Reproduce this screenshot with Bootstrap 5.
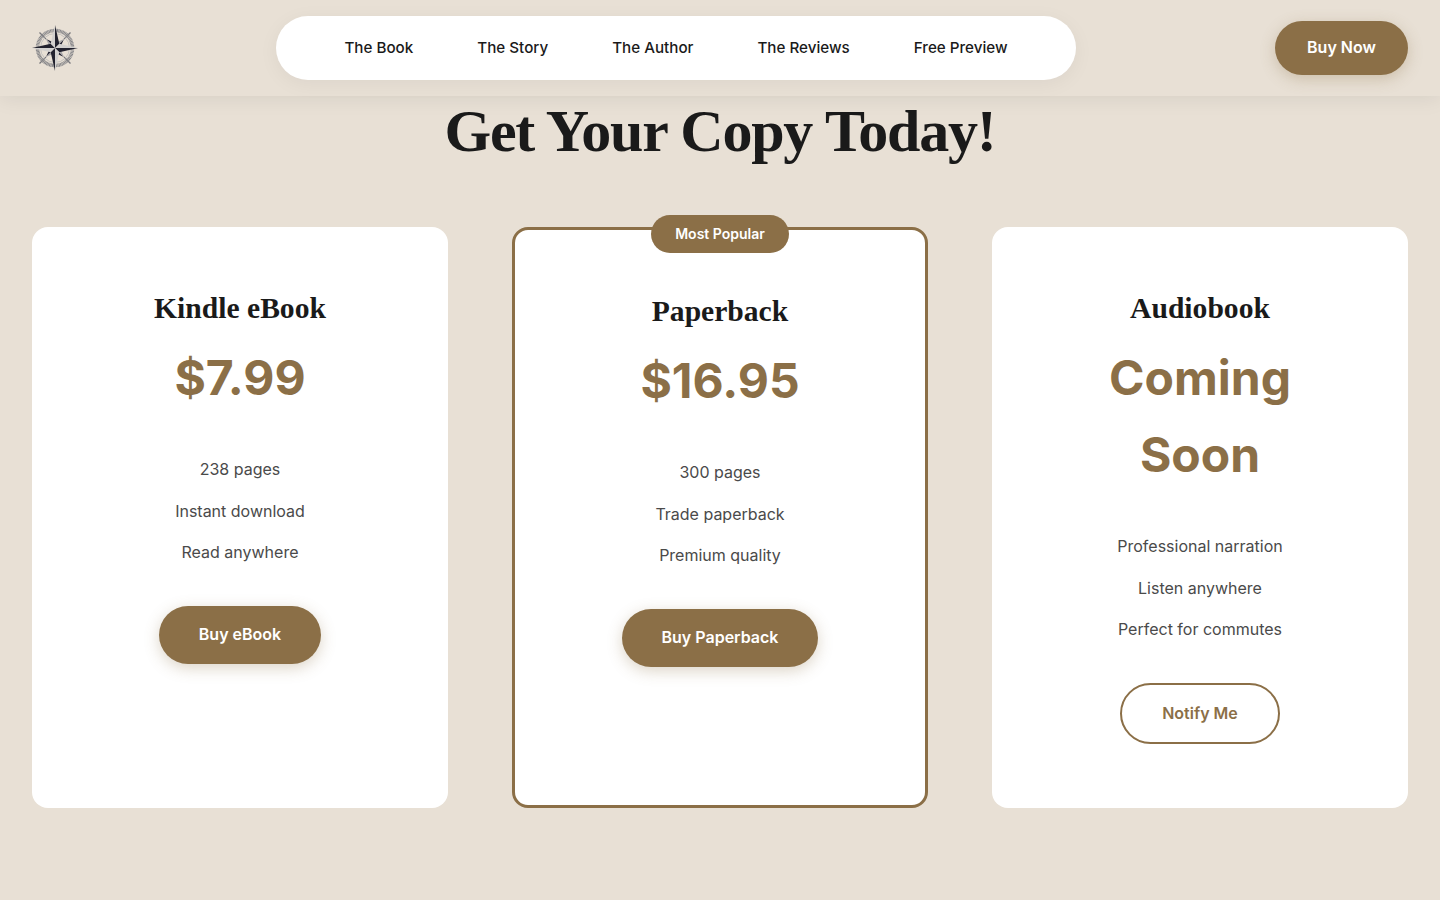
<!DOCTYPE html>
<html lang="en">
<head>
  <meta charset="UTF-8" />
  <meta name="viewport" content="width=device-width, initial-scale=1" />
  <title>Get Your Copy</title>
  <link href="https://cdn.jsdelivr.net/npm/bootstrap@5.3.3/dist/css/bootstrap.min.css" rel="stylesheet" />
  <style>
    body { background: #e8e0d5; font-family: Inter, "Liberation Sans", sans-serif; color: #1a1a1a; line-height: 1.6; }
    .top-bar { height: 96px; padding: 0 32px; background: #e8e0d5; box-shadow: 0 2px 20px rgba(0,0,0,.08); }
    .brand-mark { width: 46px; height: 46px; display: block; }
    .pill-nav { width: 800px; height: 64px; margin-right: 1px; background: #fff; border-radius: 32px; box-shadow: 0 4px 20px rgba(0,0,0,.05); gap: 64px; }
    .pill-nav a { color: #1a1a1a; font-size: 15.2px; font-weight: 500; text-decoration: none; }
    .btn-brown { background: #8b6f47; color: #fff; border: 0; border-radius: 50px; font-weight: 600; box-shadow: 0 4px 15px rgba(139,111,71,.3); }
    .btn-brown:hover { background: #8b6f47; color: #fff; }
    .btn-now { width: 133px; height: 54px; padding: 0 0 2px; font-size: 16px; }
    .btn-plan { height: 58px; padding: 0 40px 2px; font-size: 16px; }
    .btn-notify { width: 160px; height: 61px; padding: 0 0 1px; background: #fff; color: #8b6f47; border: 2px solid #8b6f47; border-radius: 50px; font-weight: 600; font-size: 16px; }
    .btn-notify:hover { background: #fff; color: #8b6f47; border-color: #8b6f47; }
    .page-title { font-family: "Liberation Serif", serif; font-weight: 700; font-size: 60px; line-height: 70px; margin: 0 0 61px; color: #1a1a1a; letter-spacing: -1.2px; }
    .plans { padding: 0 32px; }
    .plan-box { height: 581px; border: 0; border-radius: 16px; padding: 48px 56px; text-align: center; background: #fff; }
    .plan-box.featured { border: 3px solid #8b6f47; padding: 48px 53px; }
    .plan-name { font-family: "Liberation Serif", serif; font-weight: 700; font-size: 29.6px; line-height: 46px; margin: 10px 0 0; color: #1a1a1a; }
    .plan-price { font-size: 48px; font-weight: 700; color: #8b6f47; line-height: 77px; margin: 8px 0 33px; }
    .plan-points { margin: 0 0 32px; color: #4a4a4a; font-size: 16px; }
    .plan-points li { padding: 8px 0; line-height: 25.6px; }
    .ribbon { top: -15px; left: 50%; transform: translateX(-50%); width: 138px; height: 38px; background: #8b6f47; color: #fff; border-radius: 20px; font-size: 14px; font-weight: 600; }
  </style>
</head>
<body>
<header class="top-bar d-flex align-items-center justify-content-between position-relative">
  <a href="#" aria-label="Home">
    <svg class="brand-mark" viewBox="1 1 46 46">
      <g stroke="#77777b" stroke-width="1.3"><path d="M8.500 8.500l6.500 6.500M39.500 8.500l-6.500 6.500M8.500 39.500l6.500-6.500M39.500 39.500l-6.500-6.500"/></g>
      <circle cx="24" cy="24" r="17.500" fill="none" stroke="#87878a" stroke-width="3.500" stroke-dasharray="1 .4"/>
      <circle cx="24" cy="24" r="14.500" fill="none" stroke="#c4c2bf" stroke-width="1"/>
      <path d="M24 24l-9-9 9 4zM24 24l9-9-4 9zM24 24l9 9-9-4zM24 24l-9 9 4-9z" fill="#2a2a38"/>
      <path d="M24 24l-9-9 4 9zM24 24l9-9-9 4zM24 24l9 9-4-9zM24 24l-9 9 9-4z" fill="#a9a8aa"/>
      <path d="M24 1l4.300 18.700L24 24zM47 24l-18.700 4.300L24 24zM24 47l-4.300-18.700L24 24zM1 24l18.700-4.300L24 24z" fill="#22222e"/>
      <path d="M24 1l-4.300 18.700L24 24zM47 24l-18.700-4.300L24 24zM24 47l4.300-18.700L24 24zM1 24l18.700 4.300L24 24z" fill="#d2d0ce"/>
    </svg>
  </a>
  <nav class="pill-nav nav d-flex align-items-center justify-content-center">
    <a href="#">The Book</a>
    <a href="#">The Story</a>
    <a href="#">The Author</a>
    <a href="#">The Reviews</a>
    <a href="#">Free Preview</a>
  </nav>
  <a href="#" class="btn btn-brown btn-now d-flex align-items-center justify-content-center">Buy Now</a>
</header>

<main>
  <h1 class="page-title text-center">Get Your Copy Today!</h1>
  <div class="plans">
    <div class="row" style="--bs-gutter-x: 64px">
      <div class="col-4">
        <div class="card plan-box">
          <h3 class="plan-name">Kindle eBook</h3>
          <div class="plan-price">$7.99</div>
          <ul class="list-unstyled plan-points">
            <li>238 pages</li>
            <li>Instant download</li>
            <li>Read anywhere</li>
          </ul>
          <div><a href="#" class="btn btn-brown btn-plan d-inline-flex align-items-center">Buy eBook</a></div>
        </div>
      </div>
      <div class="col-4">
        <div class="card plan-box featured position-relative">
          <span class="ribbon position-absolute d-flex align-items-center justify-content-center">Most Popular</span>
          <h3 class="plan-name">Paperback</h3>
          <div class="plan-price">$16.95</div>
          <ul class="list-unstyled plan-points">
            <li>300 pages</li>
            <li>Trade paperback</li>
            <li>Premium quality</li>
          </ul>
          <div><a href="#" class="btn btn-brown btn-plan d-inline-flex align-items-center">Buy Paperback</a></div>
        </div>
      </div>
      <div class="col-4">
        <div class="card plan-box">
          <h3 class="plan-name">Audiobook</h3>
          <div class="plan-price">Coming Soon</div>
          <ul class="list-unstyled plan-points">
            <li>Professional narration</li>
            <li>Listen anywhere</li>
            <li>Perfect for commutes</li>
          </ul>
          <div><a href="#" class="btn btn-notify d-inline-flex align-items-center justify-content-center">Notify Me</a></div>
        </div>
      </div>
    </div>
  </div>
</main>
<script src="https://cdn.jsdelivr.net/npm/bootstrap@5.3.3/dist/js/bootstrap.bundle.min.js"></script>
</body>
</html>
